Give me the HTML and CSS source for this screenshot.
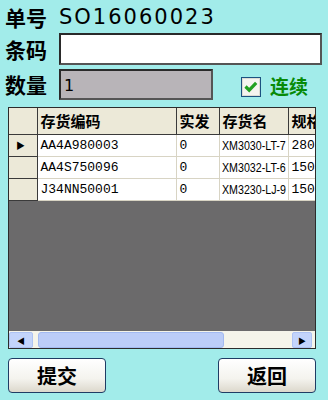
FILE: index.html
```html
<!doctype html>
<html lang="zh">
<head>
    <meta charset="UTF-8">
    <title>发货扫描</title>
    <link rel="stylesheet" href="styles.css">
</head>
<body>
    <div class="screen">
        <div class="row row-order">
            <span class="lbl">单号</span>
            <span class="order-no">SO16060023</span>
        </div>
        <div class="row row-code">
            <span class="lbl">条码</span>
            <div class="input barcode"></div>
        </div>
        <div class="row row-qty">
            <span class="lbl">数量</span>
            <div class="input qty">1</div>
            <span class="check">
                <svg width="20" height="20" viewBox="0 0 20 20">
                    <rect x="0.5" y="0.5" width="19" height="19" fill="#f4f4f0" stroke="#1c5180"/>
                    <rect x="1.5" y="1.5" width="17" height="17" fill="none" stroke="#dcdcd4"/>
                    <path d="M4.5 9.5 L8.2 13.2 L15.2 5.8" fill="none" stroke="#21a121" stroke-width="3.2"/>
                </svg>
            </span>
            <span class="cont">连续</span>
        </div>

        <div class="grid">
            <div class="grid-body">
                <table>
                    <colgroup>
                        <col class="c-hdr"><col class="c-code"><col class="c-qty"><col class="c-name"><col class="c-spec">
                    </colgroup>
                    <tr class="head">
                        <th></th><th>存货编码</th><th>实发</th><th>存货名</th><th>规格</th>
                    </tr>
                    <tr>
                        <th class="cur">&#9654;</th><td class="code">AA4A980003</td><td>0</td><td class="name"><span>XM3030-LT-7</span></td><td>280</td>
                    </tr>
                    <tr>
                        <th></th><td class="code">AA4S750096</td><td>0</td><td class="name"><span>XM3032-LT-6</span></td><td>150</td>
                    </tr>
                    <tr>
                        <th></th><td class="code">J34NN50001</td><td>0</td><td class="name"><span>XM3230-LJ-9</span></td><td>150</td>
                    </tr>
                </table>
            </div>
            <div class="hscroll">
                <span class="sb-btn">&#9664;</span>
                <span class="sb-thumb"></span>
                <span class="sb-btn right">&#9654;</span>
            </div>
        </div>

        <div class="actions">
            <button class="btn">提交</button>
            <button class="btn">返回</button>
        </div>
    </div>
</body>
</html>
```

FILE: styles.css
```css
html, body{
    margin: 0;
    padding: 0;
    background: #a2ecea;
}
.screen{
    width: 328px;
    height: 400px;
    box-sizing: border-box;
    padding-top: 2px;
    font-family: "Noto Sans CJK SC", sans-serif;
}
.row{
    display: flex;
    align-items: center;
    padding-left: 5px;
}
.row-order{
    height: 30px;
}
.row-code{
    height: 32px;
    margin-top: 1px;
}
.row-qty{
    height: 31px;
    margin-top: 4px;
}
.lbl{
    width: 54px;
    font-size: 21px;
    font-weight: bold;
    color: #000;
    line-height: 1;
}
.order-no{
    font-family: "DejaVu Sans", sans-serif;
    font-size: 21px;
    letter-spacing: 2px;
    color: #000;
}
.input{
    box-sizing: border-box;
    border: 2px solid #2a2a2a;
    border-right-color: #555;
    border-bottom-color: #555;
    height: 100%;
}
.barcode{
    width: 263px;
    background: #fff;
}
.qty{
    width: 154px;
    background: #b8b4b8;
    font-family: "DejaVu Sans", sans-serif;
    font-size: 16px;
    padding: 5px 0 0 3px;
}
.check{
    margin-left: 28px;
    width: 20px;
    height: 20px;
    margin-top: 4px;
}
.check svg{
    display: block;
}
.cont{
    margin-left: 9px;
    margin-top: 2px;
    font-size: 19px;
    font-weight: bold;
    color: #078a07;
}

.grid{
    margin: 7px 0 0 8px;
    width: 308px;
    height: 242px;
    box-sizing: border-box;
    border: 1px solid #2c2c2c;
    background: #6b6a6b;
    display: flex;
    flex-direction: column;
}
.grid-body{
    flex: 1;
    overflow: hidden;
}
table{
    border-collapse: collapse;
    table-layout: fixed;
    width: 340px;
}
.c-hdr{ width: 28px; }
.c-code{ width: 139px; }
.c-qty{ width: 43px; }
.c-name{ width: 69px; }
.c-spec{ width: 61px; }
th, td{
    height: 22px;
    padding: 0 0 0 3px;
    white-space: nowrap;
    overflow: hidden;
    text-align: left;
    box-sizing: border-box;
}
th{
    background: #ece9d8;
    border: 1px solid #3a3a3a;
    border-top: none;
    border-left: none;
}
.head th{
    height: 26px;
    font-size: 15px;
    font-weight: bold;
    color: #000;
}
td{
    background: #fff;
    border: 1px solid #d8d4c4;
    border-left-color: #9c9c94;
    font-family: "Liberation Mono", monospace;
    font-size: 13px;
    color: #000;
}
td.name{
    font-family: "Liberation Sans", sans-serif;
    font-size: 13px;
    padding-left: 2px;
}
td.name span{
    display: inline-block;
    transform: scaleX(0.82);
    transform-origin: left center;
}
.cur{
    font-size: 9px;
    padding-left: 7px;
}

.hscroll{
    height: 17px;
    background: #f5f4ea;
    display: flex;
    align-items: stretch;
    padding: 1px 3px 0 0;
    box-sizing: border-box;
}
.sb-btn{
    width: 22px;
    background: #c3d4fb;
    border: 1px solid #aec3f3;
    border-radius: 2px;
    font-size: 8px;
    display: flex;
    align-items: center;
    justify-content: center;
    color: #000;
}
.sb-btn.right{
    width: 18px;
    margin-left: auto;
}
.sb-thumb{
    margin-left: 5px;
    width: 184px;
    background: #bccdf8;
    border: 1px solid #a3baf1;
    border-radius: 3px;
}

.actions{
    display: flex;
    justify-content: space-between;
    padding: 0 12px 0 8px;
    margin-top: 9px;
}
.btn{
    width: 98px;
    height: 35px;
    border: 1px solid #1f3c64;
    border-radius: 4px;
    background: linear-gradient(#ffffff, #f4f3ee 60%, #dcd8cc);
    font-family: "Noto Sans CJK SC", sans-serif;
    font-size: 20px;
    font-weight: bold;
    color: #000;
    padding: 0;
}
```
